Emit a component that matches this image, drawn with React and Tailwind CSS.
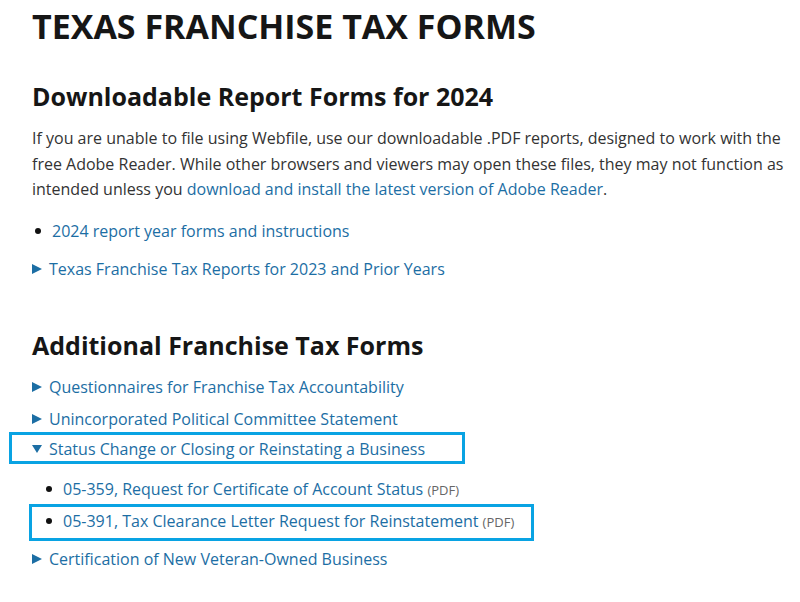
const LINK = 'text-[#1c6ea4]'

function Arrow({ down = false }) {
  return (
    <svg width="10" height="10" viewBox="0 0 10 10" className="shrink-0" fill="currentColor">
      {down ? <polygon points="0,1 10,1 5,9" /> : <polygon points="0,0 10,5 0,10" />}
    </svg>
  )
}

function Toggle({ label, down, className = '' }) {
  return (
    <div className={`flex items-center gap-[7px] text-[16px] leading-[24px] ${LINK} ${className}`}>
      <Arrow down={down} />
      <span>{label}</span>
    </div>
  )
}

function Dot() {
  return <span className="w-[6px] h-[6px] rounded-full bg-[#111] shrink-0" />
}

function PdfLink({ children }) {
  return (
    <span>
      <a className={LINK}>{children}</a>{' '}
      <span className="text-[13px] text-[#666]">(PDF)</span>
    </span>
  )
}

export default function App() {
  return (
    <div className="bg-white min-h-[602px] pl-8 pr-[12px] pt-[4px] overflow-hidden text-[#222] font-['Open_Sans',sans-serif]">
      <h1 className="text-[34px] leading-[44px] font-bold text-[#161616]">TEXAS FRANCHISE TAX FORMS</h1>

      <h2 className="mt-[32px] text-[25px] leading-[32px] font-bold text-[#161616]">Downloadable Report Forms for 2024</h2>
      <p className="mt-[14px] text-[16px] leading-[25.5px] text-[#333]">
        If you are unable to file using Webfile, use our downloadable .PDF reports, designed to work with the free Adobe Reader. While other browsers and viewers may open these files, they may not function as intended unless you{' '}
        <a className={LINK}>download and install the latest version of Adobe Reader</a>.
      </p>

      <ul className="mt-[16px] text-[16px] leading-[24px]">
        <li className="flex items-center pl-[3px] gap-[11px]">
          <Dot />
          <a className={LINK}>2024 report year forms and instructions</a>
        </li>
      </ul>

      <Toggle className="mt-[14px]" label="Texas Franchise Tax Reports for 2023 and Prior Years" />

      <h2 className="mt-[48px] text-[25px] leading-[32px] font-bold text-[#161616]">Additional Franchise Tax Forms</h2>

      <Toggle className="mt-[14px]" label="Questionnaires for Franchise Tax Accountability" />
      <Toggle className="mt-[8px]" label="Unincorporated Political Committee Statement" />
      <div className="mt-[1px] -ml-[23px] w-[456px] border-[3px] border-[#09a3e3] pt-[2px] pl-[20px]">
        <Toggle down label="Status Change or Closing or Reinstating a Business" />
      </div>

      <ul className="mt-[13px] text-[16px] leading-[24px]">
        <li className="flex items-center pl-[14px] gap-[11px]">
          <Dot />
          <PdfLink>05-359, Request for Certificate of Account Status</PdfLink>
        </li>
        <li className="mt-[2px] -ml-[3px] w-[505px] border-[3px] border-[#09a3e3] pt-[2px] pb-[4px] pl-[14px] flex items-center gap-[11px]">
          <Dot />
          <PdfLink>05-391, Tax Clearance Letter Request for Reinstatement</PdfLink>
        </li>
      </ul>

      <Toggle className="mt-[6px]" label="Certification of New Veteran-Owned Business" />
    </div>
  )
}
